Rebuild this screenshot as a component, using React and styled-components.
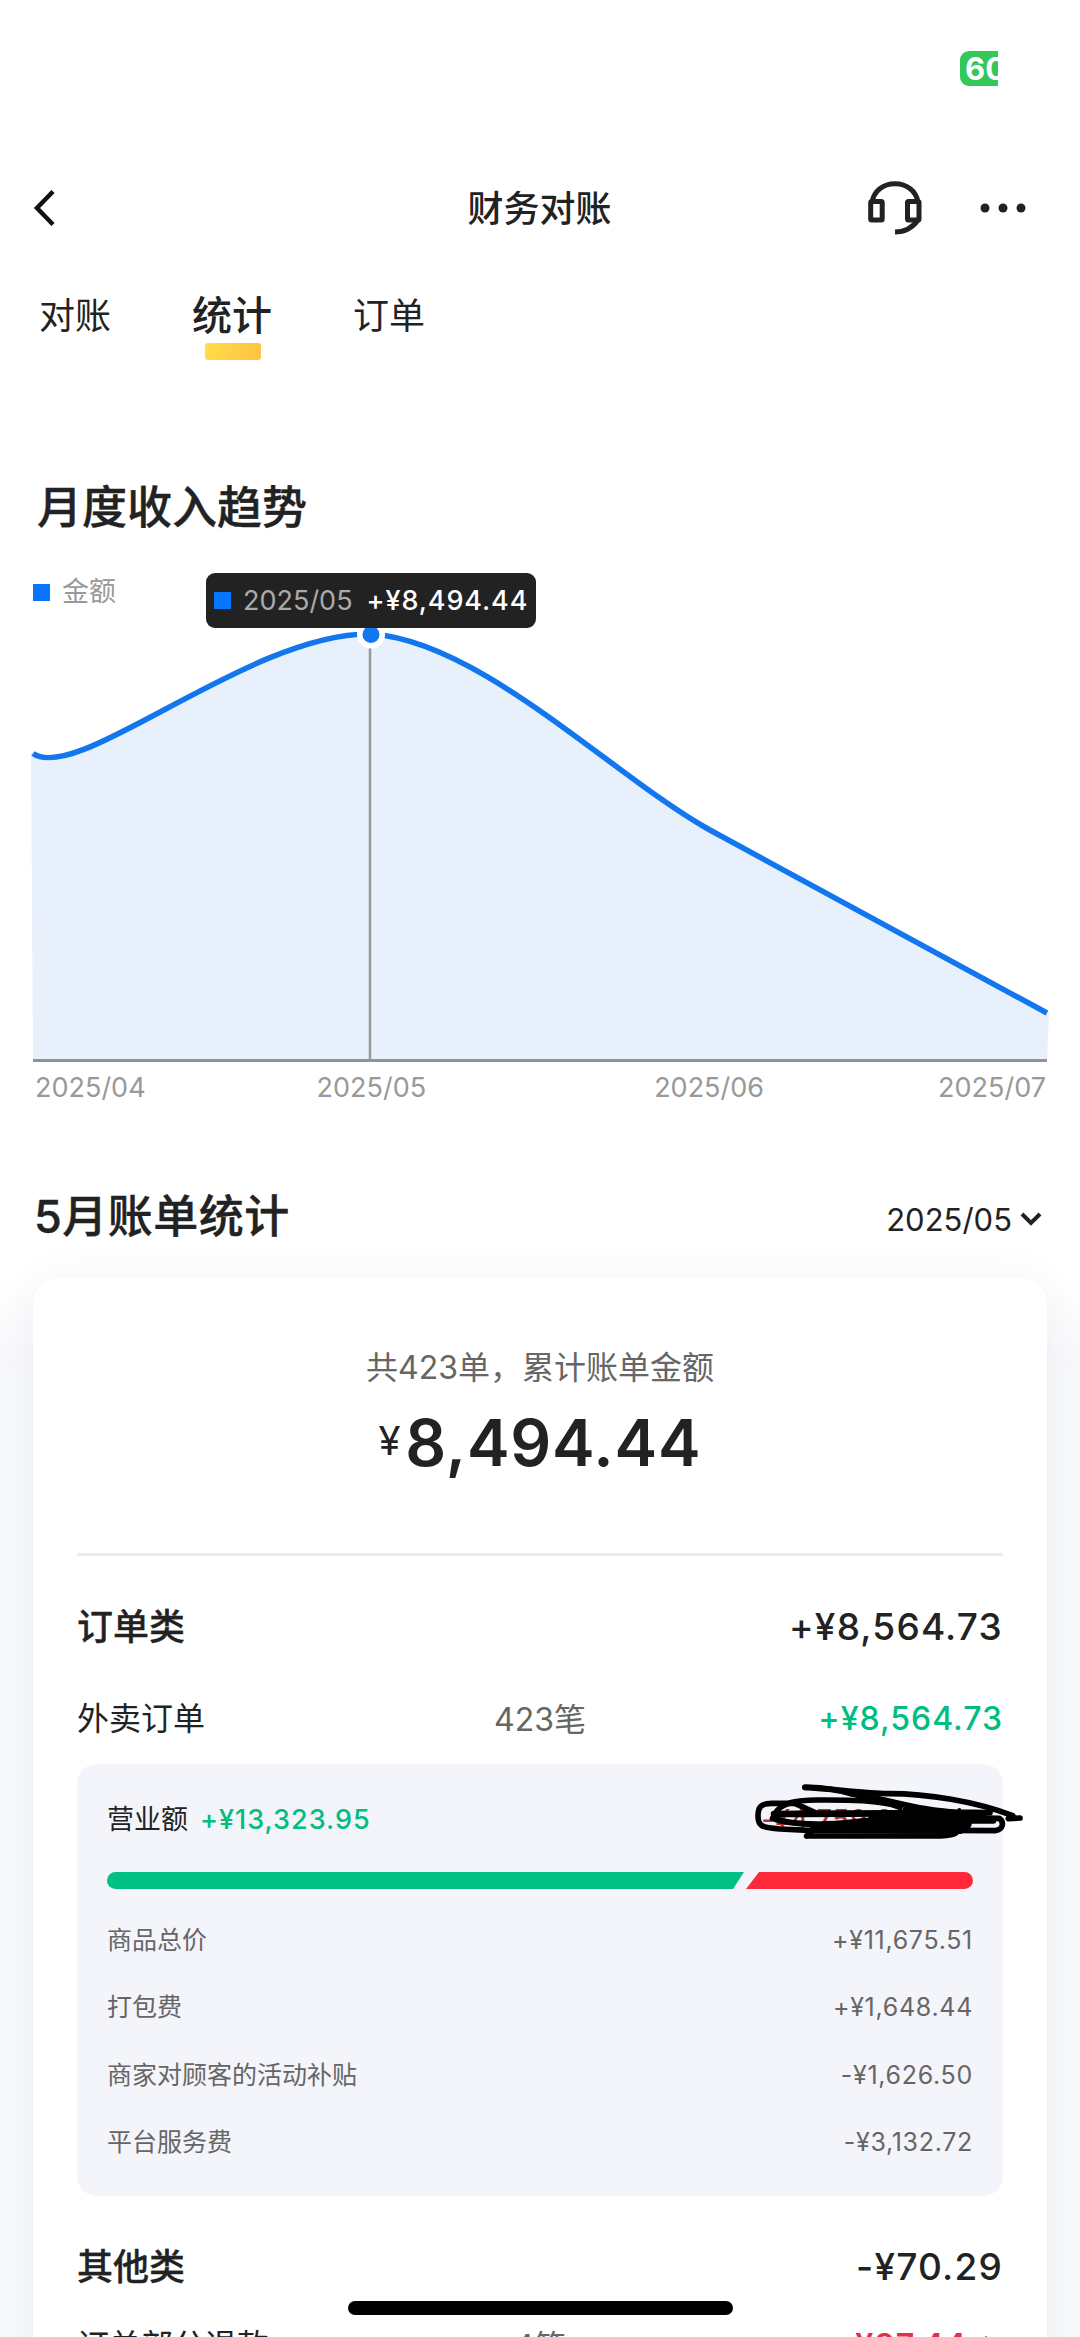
import React from 'react';
import styled, { createGlobalStyle } from 'styled-components';

const details = [
  { label: '商品总价', value: '+¥11,675.51' },
  { label: '打包费', value: '+¥1,648.44' },
  { label: '商家对顾客的活动补贴', value: '-¥1,626.50' },
  { label: '平台服务费', value: '-¥3,132.72' },
];

const months = ['2025/04', '2025/05', '2025/06', '2025/07'];

const CURVE = 'M33 180.5 C78 212 250 59 371 61 C480 68 612 202 708 256 L1047 440';

const BackIcon = () => (
  <svg width="28" height="44" viewBox="0 0 28 44" fill="none" stroke="#111" strokeWidth="4.5">
    <path d="M22 5.500 L6 22 L22 38.500" />
  </svg>
);

const HeadsetIcon = () => (
  <svg width="54" height="54" viewBox="0 0 54 54" fill="none" stroke="#222" strokeWidth="5">
    <path d="M4 21 C6 10 15 2.700 27 2.700 S48 10 50 21" />
    <rect x="2.700" y="20.500" width="11.500" height="18.500" rx="1" />
    <rect x="39.500" y="20.500" width="11.500" height="18.500" rx="1" />
    <path d="M50 39 C45 46 37 51 27 51" />
  </svg>
);

const MoreIcon = () => (
  <svg width="46" height="10" viewBox="0 0 46 10" fill="#222">
    <circle cx="5" cy="5" r="4.500" />
    <circle cx="23" cy="5" r="4.500" />
    <circle cx="41" cy="5" r="4.500" />
  </svg>
);

const ChevronIcon = () => (
  <svg width="24" height="16" viewBox="0 0 24 16" fill="none" stroke="#222" strokeWidth="4">
    <path d="M3 3 L12 12 L21 3" />
  </svg>
);

const ArrowIcon = () => (
  <svg width="12" height="20" viewBox="0 0 12 20" fill="none" stroke="#222" strokeWidth="3">
    <path d="M2 2 L10 10 L2 18" />
  </svg>
);

const Scribble = () => (
  <ScribbleSvg viewBox="150 90 831 189" fill="none" stroke="#000" strokeLinecap="round" strokeLinejoin="round">
    <g strokeWidth="17">
      <path d="M315 112 C380 109 440 128 500 142 S580 165 600 172" />
      <path d="M315 112 C400 117 500 130 560 131 C680 130 830 155 938 197 L925 206 L960 204" />
      <path d="M450 130 C560 145 640 180 760 186 L870 188" />
      <path d="M290 160 L215 160 C182 160 174 172 174 198 C174 228 185 233 240 237 L340 242" />
      <path d="M280 158 L350 190" />
      <path d="M225 193 C240 155 300 150 350 150 C430 150 530 148 600 170" />
      <path d="M320 258 L335 240 M320 258 L720 258 C750 257 768 250 772 245" />
      <path d="M760 241 L885 242 C912 238 912 215 898 205 L740 202" />
    </g>
    <path strokeWidth="20" d="M222 192 C330 192 400 190 560 190 L850 190" />
    <path strokeWidth="18" d="M218 205 C260 222 330 224 400 223 L500 212 L880 212" />
    <path strokeWidth="30" d="M370 228 L500 225 L800 222 M520 203 L790 202" />
    <path strokeWidth="24" d="M340 238 L780 240 M620 180 L780 192" />
    <path strokeWidth="12" d="M778 180 V236" />
  </ScribbleSvg>
);

const Chart = () => (
  <ChartArea>
    <ChartSvg viewBox="0 0 1080 492" fill="none">
      <path d={`${CURVE} L1049 440 L1047 488 L33 488 L31 180 Z`} fill="#e8f0fc" />
      <path d="M33 487.500 H1047" stroke="#8f949b" strokeWidth="3" />
      <path d="M370 62 V488" stroke="#969799" strokeWidth="2.500" />
      <path d={CURVE} stroke="#1276ee" strokeWidth="5.500" />
      <circle cx="371" cy="61.500" r="14" fill="#fff" />
      <circle cx="371" cy="61.500" r="8.500" fill="#1276ee" />
    </ChartSvg>
    <Legend><Swatch />金额</Legend>
    <Tooltip>
      <Swatch />
      <TooltipMonth>2025/05</TooltipMonth>
      <TooltipAmount>+¥8,494.44</TooltipAmount>
    </Tooltip>
  </ChartArea>
);

export default function App() {
  return (
    <Screen>
      <GlobalStyle />
      <StatusBar><Battery>60</Battery></StatusBar>
      <Header>
        <BackIcon />
        <Title>财务对账</Title>
        <Actions><HeadsetIcon /><MoreIcon /></Actions>
      </Header>
      <Tabs>
        <Tab>对账</Tab>
        <Tab $active>统计</Tab>
        <Tab>订单</Tab>
      </Tabs>
      <Heading>月度收入趋势</Heading>
      <Chart />
      <Months>{months.map((month) => <span key={month}>{month}</span>)}</Months>
      <BillHeader>
        <BillTitle>5月账单统计</BillTitle>
        <MonthPicker>2025/05<ChevronIcon /></MonthPicker>
      </BillHeader>
      <Backdrop>
        <Card>
          <Summary>共423单，累计账单金额</Summary>
          <Total><Currency>¥</Currency>8,494.44</Total>
          <GroupRow><Label>订单类</Label><GroupAmount>+¥8,564.73</GroupAmount></GroupRow>
          <ItemRow>
            <Label>外卖订单</Label>
            <Count>423笔</Count>
            <Amount $color="#00bd80">+¥8,564.73</Amount>
          </ItemRow>
          <DetailBox>
            <Turnover>
              <Label>营业额</Label>
              <Amount $color="#00bd80">+¥13,323.95</Amount>
              <Cost>-¥4,759.22</Cost>
              <Scribble />
            </Turnover>
            <Ratio><Income /><Expense /></Ratio>
            {details.map(({ label, value }) => (
              <Detail key={label}><Label>{label}</Label><DetailValue>{value}</DetailValue></Detail>
            ))}
          </DetailBox>
          <GroupRow><Label>其他类</Label><GroupAmount>-¥70.29</GroupAmount></GroupRow>
          <RefundRow>
            <Label>订单部分退款</Label>
            <Count>4笔</Count>
            <Refund $color="#e0304a">-¥87.44<ArrowIcon /></Refund>
          </RefundRow>
        </Card>
      </Backdrop>
      <HomeIndicator />
    </Screen>
  );
}

const GlobalStyle = createGlobalStyle`
  * {
    box-sizing: border-box;
  }

  body {
    margin: 0;
    background: #ffffff;
  }

  svg {
    display: block;
    flex-shrink: 0;
  }
`;

const Screen = styled.div`
  position: relative;
  width: 1080px;
  height: 2337px;
  overflow: hidden;
  color: #222222;
  font-family: Inter, 'Noto Sans CJK SC', sans-serif;
  white-space: nowrap;
`;

const StatusBar = styled.div`
  display: flex;
  justify-content: flex-end;
  height: 160px;
  padding: 51px 82px 0 0;
`;

const Battery = styled.div`
  width: 38px;
  height: 35px;
  padding-left: 5px;
  overflow: hidden;
  border-radius: 9px 0 0 9px;
  background: #34c759;
  color: #ffffff;
  font-size: 31px;
  font-weight: 700;
  line-height: 35px;
`;

const Header = styled.div`
  display: grid;
  grid-template-columns: 1fr auto 1fr;
  align-items: center;
  height: 96px;
  padding: 0 54px 0 31px;
`;

const Title = styled.div`
  padding: 0 0 4px 22px;
  font-size: 36px;
  font-weight: 500;
`;

const Actions = styled.div`
  display: flex;
  align-items: center;
  justify-content: flex-end;
  gap: 58px;
`;

const Tabs = styled.div`
  display: flex;
  align-items: center;
  gap: 81px;
  height: 120px;
  padding: 0 0 6px 39px;
`;

const Tab = styled.div`
  position: relative;
  font-size: ${({ $active }) => ($active ? 40 : 36)}px;
  font-weight: ${({ $active }) => ($active ? 500 : 400)};

  &::after {
    content: '';
    display: ${({ $active }) => ($active ? 'block' : 'none')};
    position: absolute;
    left: 13px;
    top: 59px;
    width: 56px;
    height: 17px;
    border-radius: 3px;
    background: linear-gradient(110deg, #ffde48, #ffc146);
  }
`;

const Heading = styled.div`
  height: 197px;
  padding: 109px 0 0 37px;
  font-size: 45px;
  font-weight: 500;
  line-height: 45px;
  -webkit-text-stroke: 0.4px;
`;

const ChartArea = styled.div`
  position: relative;
  height: 492px;
`;

const ChartSvg = styled.svg`
  width: 1080px;
  height: 492px;
`;

const Swatch = styled.i`
  width: 17px;
  height: 17px;
  background: #0875ff;
`;

const Legend = styled.div`
  position: absolute;
  left: 33px;
  top: 3px;
  display: flex;
  align-items: center;
  gap: 12px;
  color: #999999;
  font-size: 27px;
  line-height: 32px;
`;

const Tooltip = styled.div`
  position: absolute;
  left: 206px;
  top: 0;
  display: flex;
  align-items: center;
  width: 330px;
  height: 55px;
  padding: 0 0 1px 8px;
  border-radius: 9px;
  background: #222222;
  color: #ffffff;
  font-size: 27px;
  font-weight: 500;
`;

const TooltipMonth = styled.span`
  margin: 0 14px 0 12px;
  color: #aaaaaa;
  font-weight: 400;
`;

const TooltipAmount = styled.span`
  letter-spacing: 0.9px;
`;

const Months = styled.div`
  display: flex;
  height: 120px;
  padding: 6px 34px 0 35px;
  color: #999999;
  font-size: 27px;
  line-height: 34px;

  span:nth-child(2) {
    margin-left: 171px;
  }

  span:nth-child(3) {
    margin-left: 228px;
  }

  span:nth-child(4) {
    margin-left: auto;
  }
`;

const BillHeader = styled.div`
  display: flex;
  align-items: center;
  justify-content: space-between;
  height: 60px;
  padding: 0 37px 0 34px;
`;

const BillTitle = styled.div`
  padding-bottom: 3px;
  font-size: 45px;
  font-weight: 500;
  letter-spacing: 0.5px;
  -webkit-text-stroke: 0.4px;
`;

const MonthPicker = styled.div`
  display: flex;
  align-items: center;
  gap: 7px;
  padding-top: 8px;
  font-size: 31px;
`;

const Backdrop = styled.div`
  padding: 33px 33px 0;
  background: linear-gradient(#ffffff 30px, #f8f8fc 121px, #f8f9fa 123px);
`;

const Card = styled.div`
  height: 1100px;
  padding: 67px 44px 0;
  border-radius: 26px;
  background: #ffffff;
  box-shadow: 0 0 40px rgba(40, 60, 90, 0.06);
`;

const Summary = styled.div`
  height: 46px;
  color: #666666;
  font-size: 32px;
  line-height: 46px;
  text-align: center;
`;

const Total = styled.div`
  display: flex;
  justify-content: center;
  height: 165px;
  padding-top: 12px;
  border-bottom: 3px solid #ebebeb;
  font-size: 64px;
  font-weight: 600;
  letter-spacing: 0.8px;
  line-height: 80px;
`;

const Currency = styled.span`
  margin-right: 4px;
  font-size: 40px;
  font-weight: 400;
  line-height: 76px;
`;

/* CJK glyphs sit lower in the line than the digits beside them */
const Label = styled.span`
  padding-bottom: 4px;
`;

const GroupRow = styled.div`
  display: flex;
  align-items: center;
  justify-content: space-between;
  height: 50px;
  margin-top: 45px;
  font-size: 36px;
  font-weight: 500;

  ${Label} {
    -webkit-text-stroke: 0.3px;
  }
`;

const GroupAmount = styled.span`
  font-size: 37px;
  letter-spacing: 1.2px;
`;

const ItemRow = styled.div`
  display: grid;
  grid-template-columns: 1fr auto 1fr;
  align-items: center;
  height: 46px;
  margin: 42px 0 25px;
  font-size: 32px;
`;

const Count = styled.span`
  padding-bottom: 3px;
  color: #666666;
`;

const Amount = styled.span`
  justify-self: end;
  color: ${({ $color }) => $color};
  font-weight: 500;
  letter-spacing: 1px;
`;

const DetailBox = styled.div`
  height: 432px;
  padding: 35px 30px 0;
  border-radius: 20px;
  background: #f4f5fa;
`;

const Turnover = styled.div`
  position: relative;
  display: flex;
  align-items: center;
  gap: 12px;
  height: 40px;
  margin-bottom: 33px;
  font-size: 27px;
`;

const Cost = styled.span`
  margin: 0 62px 0 auto;
  color: #c5283a;
  font-weight: 500;
  letter-spacing: 0.8px;
`;

const ScribbleSvg = styled.svg`
  position: absolute;
  left: 643px;
  top: -19px;
  width: 277px;
  height: 63px;
`;

const Ratio = styled.div`
  display: flex;
  height: 17px;
  margin-bottom: 17px;
  overflow: hidden;
  border-radius: 9px;
`;

const Income = styled.div`
  width: 637px;
  background: #00c082;
  clip-path: polygon(0 0, 100% 0, 626px 100%, 0 100%);
`;

const Expense = styled.div`
  flex: 1;
  margin-left: 2px;
  background: #ff293b;
  clip-path: polygon(13px 0, 100% 0, 100% 100%, 0 100%);
`;

const Detail = styled.div`
  display: flex;
  align-items: center;
  justify-content: space-between;
  height: 67.5px;
  color: #666666;
  font-size: 25px;
`;

const DetailValue = styled.span`
  letter-spacing: 0.7px;
`;

const RefundRow = styled(ItemRow)`
  margin-top: 29px;
`;

const Refund = styled(Amount)`
  display: flex;
  align-items: center;
  gap: 16px;
  padding-right: 8px;
  font-weight: 600;
`;

const HomeIndicator = styled.div`
  position: absolute;
  left: 348px;
  bottom: 22px;
  width: 385px;
  height: 14px;
  border-radius: 7px;
  background: #000000;
`;
